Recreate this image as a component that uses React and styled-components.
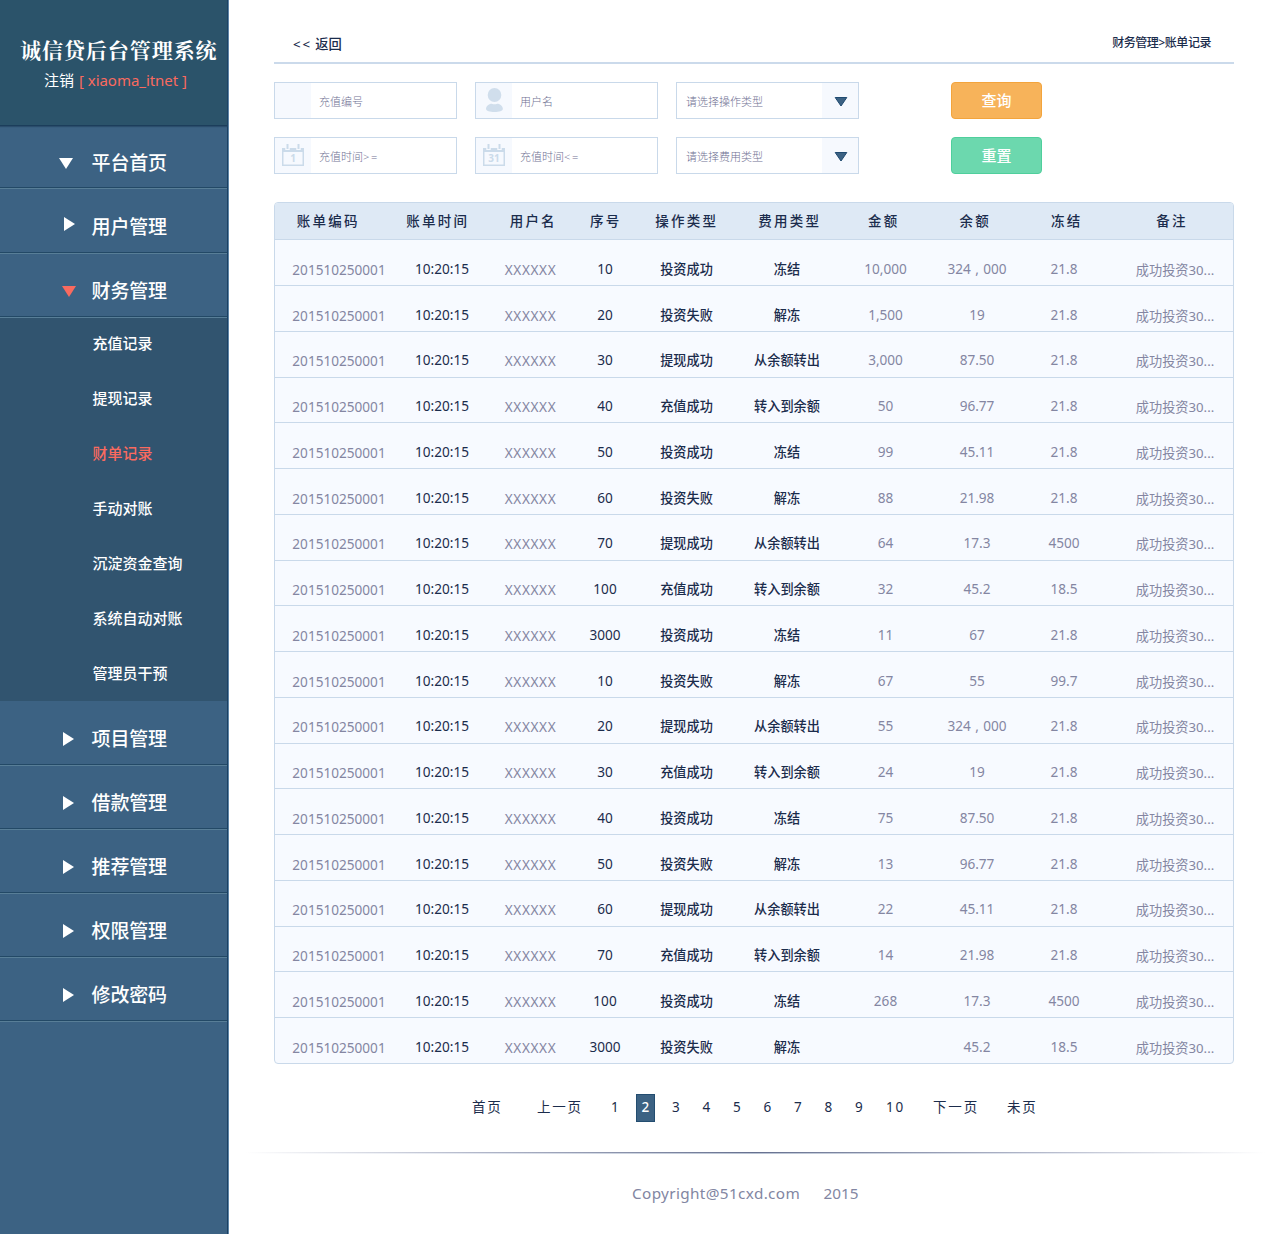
import React from "react";
import styled, { createGlobalStyle } from "styled-components";

const GlobalStyle = createGlobalStyle`
  * { box-sizing: border-box; }
  body {
    margin: 0;
    background: #fff;
    font-family: "Noto Sans", "Noto Sans CJK SC", sans-serif;
    color: #1b2c4c;
  }
`;

const Page = styled.div`
  display: flex;
  width: 1280px;
  height: 1234px;
  overflow: hidden;
`;

/* ---------- sidebar ---------- */
const Sidebar = styled.aside`
  flex: none;
  width: 229px;
  background: #3c6283;
  border-right: 1px solid #5e86a8;
  box-shadow: inset -1px 0 0 #1b4062;
  white-space: nowrap;
`;

const Brand = styled.header`
  height: 126px;
  margin-right: 1px;
  padding-top: 34px;
  background: #2b536a;
  border-bottom: 1px solid #1c3e5b;
  box-shadow: 0 1px 1px #2b4d6c;
  color: #fff;
`;

const BrandTitle = styled.h1`
  margin: 0;
  padding-left: 20px;
  font: 700 21px/30px "Noto Serif CJK SC", "Noto Sans CJK SC", serif;
  letter-spacing: 0.95px;
`;

const Account = styled.div`
  display: flex;
  gap: 5px;
  padding-left: 44px;
  font-size: 15px;
  line-height: 33px;
`;

const UserName = styled.span`
  color: #fa6a5f;
  letter-spacing: -0.04px;
`;

const MenuItem = styled.div`
  display: flex;
  align-items: center;
  height: ${(p) => p.$h || 64}px;
  margin-right: 1px;
  padding-top: ${(p) => p.$drop}px;
  border-bottom: 1px solid #587e97;
  box-shadow: inset 0 -1px 0 #234966;
  color: #fff;
  font-size: 19px;
  font-weight: 500;
  line-height: 26px;
  letter-spacing: -0.2px;
`;

const ArrowSlot = styled.span`
  display: flex;
  justify-content: flex-end;
  width: ${(p) => p.$end}px;
  margin-right: ${(p) => 91.6 - p.$end}px;
  padding-bottom: ${(p) => p.$lift || 0}px;
`;

const Triangle = styled.i`
  width: 0;
  height: 0;
  border-style: solid;
  ${(p) =>
    p.$open
      ? `border-width: 11px 7.5px 0; border-color: ${p.$color || "#fff"} transparent transparent;`
      : `border-width: 7.5px 0 7.5px 11px; border-color: transparent transparent transparent #fff;`}
`;

const SubMenu = styled.nav`
  display: flex;
  flex-direction: column;
  gap: 27px;
  height: 383px;
  margin-right: 1px;
  padding: 11px 0 0 92.5px;
  background: #31546f;
`;

const SubItem = styled.a`
  color: ${(p) => (p.$active ? "#fa6a5f" : "#fff")};
  font-size: 15px;
  font-weight: 500;
  line-height: 28px;
`;

/* ---------- main ---------- */
const Main = styled.main`
  flex: 1;
  padding-left: 45px;
  white-space: nowrap;
`;

const TopBar = styled.div`
  display: flex;
  justify-content: space-between;
  width: 960px;
  height: 64px;
  padding: 33px 23px 0 19px;
  border-bottom: 2px solid #cbdaeb;
`;

const Back = styled.a`
  font-size: 13.3px;
  font-weight: 500;
  line-height: 22px;
`;

const BackMark = styled.span`
  margin-right: 3.5px;
  letter-spacing: 1.8px;
`;

const Crumbs = styled.div`
  font-size: 12px;
  font-weight: 500;
  line-height: 19px;
  letter-spacing: -0.45px;
`;

const Filters = styled.form`
  display: grid;
  grid-template-columns: 183px 183px 183px 91px;
  gap: 18px;
  padding-top: 18px;
`;

const Field = styled.label`
  display: flex;
  height: 37px;
  border: 1px solid #c9d9ea;
  background: #fff;
  color: #6f7193;
  font-size: 11px;
  font-weight: 300;
  line-height: 37px;
`;

const IconBox = styled.span`
  display: flex;
  align-items: center;
  justify-content: center;
  width: 36px;
  background: #f6f9fe;
`;

const Placeholder = styled.span`
  flex: 1;
  padding-left: ${(p) => p.$pad || 8}px;
`;

const Compare = styled.span`
  letter-spacing: 1.8px;
`;

const Button = styled.button`
  width: 91px;
  height: 37px;
  margin-left: 74px;
  padding: 0 0 2px;
  border: 1px solid ${(p) => p.$edge};
  border-radius: 4px;
  background: ${(p) => p.$fill};
  color: #fff;
  font: 500 15px/20px "Noto Sans", "Noto Sans CJK SC", sans-serif;
`;

const Table = styled.section`
  width: 960px;
  height: 862px;
  margin-top: 28px;
  border: 1px solid #c9d9ea;
  border-radius: 4px;
  overflow: hidden;
  background: #f7faff;
`;

const HeadRow = styled.div`
  display: grid;
  grid-template-columns: 105px 114px 77px 68px 94px 112px 76px 107px 76px 129px;
  height: 37.4px;
  background: #dee9f5;
  border-bottom: 1px solid #c9d9ea;
  font-size: 13.5px;
  font-weight: 500;
  line-height: 36px;
  letter-spacing: 2.2px;
  text-align: center;
`;

const HeadCell = styled.span`
  padding-left: ${(p) => (p.$last ? 7 : 1.5)}px;
`;

const Row = styled.div`
  display: grid;
  grid-template-columns: 94px 112px 65px 84px 79px 122px 75px 108px 66px 136px;
  height: 45.75px;
  padding: 11.6px 0 0 17px;
  border-bottom: 1px solid #c9d9ea;
  line-height: 34px;
  text-align: center;
  &:last-child { border-bottom: 0; }
`;

const Cell = styled.span`
  color: ${(p) => (p.$dim ? "#8486a2" : "#1b2c4c")};
  font-weight: ${(p) => (p.$dim || p.$digits ? 400 : 500)};
  padding-left: ${(p) => (p.$note ? 20 : 0)}px;
  padding-top: ${(p) => (p.$low ? 1 : 0)}px;
  font-size: ${(p) => (p.$digits ? 13.6 : 13.2)}px;
  letter-spacing: ${(p) => p.$track || 0}px;
  word-spacing: 0.9px;
`;

const Pager = styled.nav`
  display: flex;
  align-items: center;
  height: 28px;
  margin-top: 30px;
  padding-left: 198px;
  font-size: 13.5px;
  line-height: 26px;
  letter-spacing: 1.8px;
`;

const PageLink = styled.a`
  width: ${(p) => p.$w}px;
  padding-bottom: 2px;
`;

const PageNumber = styled.a`
  width: ${(p) => p.$w || 30.5}px;
  padding: 0 0 2px 1.8px;
  text-align: center;
`;

const CurrentPage = styled.a`
  width: 19px;
  height: 28px;
  margin: 0 5.7px;
  padding-left: 1.8px;
  background: #3c6283;
  border: 1px solid #234d70;
  color: #fff;
  font-weight: 500;
  line-height: 25px;
  text-align: center;
`;

const Divider = styled.hr`
  width: 1020px;
  height: 2px;
  margin: 30px 0 0 -29px;
  border: 0;
  background:
    linear-gradient(90deg, transparent, #b4b9cb 22%, #66708f 50%, #b4b9cb 78%, transparent) 0 0 / 100% 1px no-repeat,
    linear-gradient(90deg, transparent, #e4e8f0 22%, #b9c3d3 50%, #e4e8f0 78%, transparent) 0 1px / 100% 1px no-repeat;
`;

const Footer = styled.footer`
  display: flex;
  gap: 23.5px;
  padding: 25px 0 0 358px;
  color: #8286a2;
  font-size: 15.3px;
  line-height: 28px;
`;

const Copyright = styled.span`
  letter-spacing: 0.36px;
`;

const UserIcon = () => (
  <svg width="20" height="26" viewBox="0 0 20 26" fill="#d0deec">
    <ellipse cx="10.500" cy="7" rx="6.800" ry="7" />
    <path d="M2 20.700C2.400 17.500 5.500 15.700 7.800 15.700c1.800.7 3.600.7 5.400 0 2.300 0 5.300 1.800 5.700 5 0 2.200-3.700 3.300-8.400 3.300s-8.500-1.100-8.500-3.300z" />
  </svg>
);

const DayText = styled.text`
  font: 700 10px "Noto Sans", sans-serif;
`;

const CalendarIcon = ({ day }) => (
  <svg width="24" height="24" viewBox="0 0 24 24">
    <path d="M1 4h22v18H1zM2.500 8v12.500h19V8z" fill="#cbdbea" fillRule="evenodd" />
    <path d="M6.500 0v6M17.500 0v6" stroke="#f6f9fe" strokeWidth="4.500" />
    <path d="M6.500 0v5M17.500 0v5" stroke="#cbdbea" strokeWidth="2" />
    <DayText x="12" y="18" textAnchor="middle" fill="#cbdbea">{day}</DayText>
  </svg>
);

const DropIcon = () => (
  <svg width="16" height="12" viewBox="0 0 16 12">
    <path d="M3.200 2.500h11.600L9 11z" fill="#3c6283" stroke="#1f4a70" />
  </svg>
);

const headers = ["账单编码", "账单时间", "用户名", "序号", "操作类型", "费用类型", "金额", "余额", "冻结", "备注"];
const actions = ["投资成功", "投资失败", "提现成功", "充值成功"];
const fees = ["冻结", "解冻", "从余额转出", "转入到余额"];
const serials = [10, 20, 30, 40, 50, 60, 70, 100, 3000];
const amounts = ["10,000", "1,500", "3,000", "50", "99", "88", "64", "32", "11", "67", "55", "24", "75", "13", "22", "14", "268", ""];
const balances = ["324 , 000", "19", "87.50", "96.77", "45.11", "21.98", "17.3", "45.2", "67", "55"];
const frozen = { 6: "4500", 7: "18.5", 9: "99.7", 16: "4500", 17: "18.5" };

const subItems = ["充值记录", "提现记录", "财单记录", "手动对账", "沉淀资金查询", "系统自动对账", "管理员干预"];
const lowerMenu = ["项目管理", "借款管理", "推荐管理", "权限管理", "修改密码"];

function MenuEntry({ label, open, color, end = 74, h, drop = 11, lift }) {
  return (
    <MenuItem $h={h} $drop={drop}>
      <ArrowSlot $end={end} $lift={lift}>
        <Triangle $open={open} $color={color} />
      </ArrowSlot>
      {label}
    </MenuItem>
  );
}

export default function App() {
  return (
    <Page>
      <GlobalStyle />
      <Sidebar>
        <Brand>
          <BrandTitle>诚信贷后台管理系统</BrandTitle>
          <Account>
            注销 <UserName>[ xiaoma_itnet ]</UserName>
          </Account>
        </Brand>
        <MenuEntry label="平台首页" open end={73} h={63} drop={12} />
        <MenuEntry label="用户管理" h={65} end={75} lift={5} />
        <MenuEntry label="财务管理" open color="#fa6a5f" end={76} h={64} />
        <SubMenu>
          {subItems.map((t) => (
            <SubItem key={t} $active={t === "财单记录"}>{t}</SubItem>
          ))}
        </SubMenu>
        {lowerMenu.map((t, i) => (
          <MenuEntry key={t} label={t} h={i === 0 ? 65 : 64} drop={i === 0 ? 12 : 10} />
        ))}
      </Sidebar>
      <Main>
        <TopBar>
          <Back><BackMark>&lt;&lt;</BackMark>返回</Back>
          <Crumbs>财务管理&gt;账单记录</Crumbs>
        </TopBar>
        <Filters>
          <Field><IconBox /><Placeholder>充值编号</Placeholder></Field>
          <Field><IconBox><UserIcon /></IconBox><Placeholder>用户名</Placeholder></Field>
          <Field><Placeholder $pad={9}>请选择操作类型</Placeholder><IconBox><DropIcon /></IconBox></Field>
          <Button type="button" $fill="#f7b35a" $edge="#f3a43c">查询</Button>
          <Field><IconBox><CalendarIcon day="1" /></IconBox><Placeholder>充值时间<Compare>&gt;=</Compare></Placeholder></Field>
          <Field><IconBox><CalendarIcon day="31" /></IconBox><Placeholder>充值时间<Compare>&lt;=</Compare></Placeholder></Field>
          <Field><Placeholder $pad={9}>请选择费用类型</Placeholder><IconBox><DropIcon /></IconBox></Field>
          <Button type="button" $fill="#6cd8ae" $edge="#4fcf9c">重置</Button>
        </Filters>
        <Table>
          <HeadRow>
            {headers.map((h, i) => (
              <HeadCell key={h} $last={i === 9}>{h}</HeadCell>
            ))}
          </HeadRow>
          {amounts.map((amount, i) => (
            <Row key={i}>
              <Cell $dim $low $digits>201510250001</Cell>
              <Cell $digits>10:20:15</Cell>
              <Cell $dim $low $digits $track={0.6}>XXXXXX</Cell>
              <Cell $digits>{serials[i % 9]}</Cell>
              <Cell>{actions[i % 4]}</Cell>
              <Cell>{fees[i % 4]}</Cell>
              <Cell $dim $digits>{amount}</Cell>
              <Cell $dim $digits>{balances[i % 10]}</Cell>
              <Cell $dim $digits>{frozen[i] || "21.8"}</Cell>
              <Cell $dim $low $note>成功投资30...</Cell>
            </Row>
          ))}
        </Table>
        <Pager>
          <PageLink $w={65}>首页</PageLink>
          <PageLink $w={62.7}>上一页</PageLink>
          <PageNumber>1</PageNumber>
          <CurrentPage>2</CurrentPage>
          {[3, 4, 5, 6, 7, 8, 9].map((n) => (
            <PageNumber key={n}>{n}</PageNumber>
          ))}
          <PageNumber $w={41}>10</PageNumber>
          <NextPage $w={92}>下一页</NextPage>
          <PageLink $w={40}>未页</PageLink>
        </Pager>
        <Divider />
        <Footer>
          <Copyright>Copyright@51cxd.com</Copyright>
          <span>2015</span>
        </Footer>
      </Main>
    </Page>
  );
}

const NextPage = styled(PageLink)`
  padding-left: 18px;
`;
